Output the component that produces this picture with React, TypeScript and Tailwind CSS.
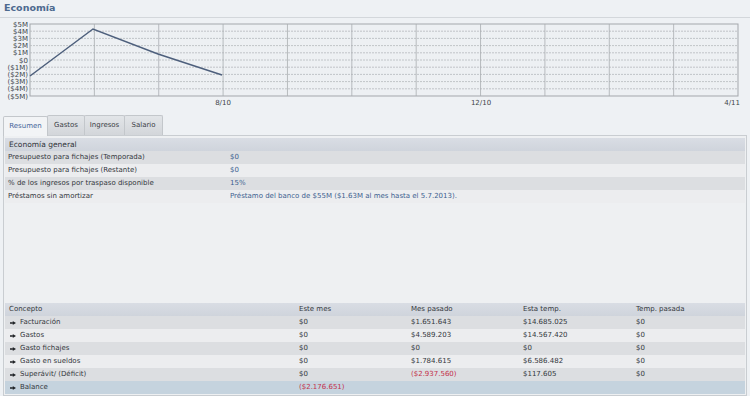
import React from "react";

const font = { fontFamily: '"DejaVu Sans", Verdana, sans-serif' };

function Chart() {
  const left = 30;
  const right = 738;
  const top = 6;
  const bottom = 78;
  const step = (bottom - top) / 10;
  const colStep = (right - left) / 11;
  const yLabels = ["$5M", "$4M", "$3M", "$2M", "$1M", "$0", "($1M)", "($2M)", "($3M)", "($4M)", "($5M)"];
  return (
    <svg width={750} height={92} className="block" style={font}>
      <rect x={left} y={top} width={right - left} height={bottom - top} fill="#edf0f3" stroke="#a3a7ab" strokeWidth={1} />
      {Array.from({ length: 9 }).map((_, i) => {
        const y = top + step * (i + 1);
        return (
          <line key={"h" + i} x1={left} x2={right} y1={y} y2={y} stroke="#b5b9bd" strokeWidth={0.8} strokeDasharray="2 1" />
        );
      })}
      {Array.from({ length: 10 }).map((_, i) => {
        const x = left + colStep * (i + 1);
        return <line key={"v" + i} x1={x} x2={x} y1={top} y2={bottom} stroke="#a9adb1" strokeWidth={0.8} />;
      })}
      {yLabels.map((l, i) => (
        <text key={l} x={28} y={top + step * i + 2.5} fontSize={7} fill="#40454b" textAnchor="end">
          {l}
        </text>
      ))}
      <polyline points="30,58 93,11 158,36 222,57" fill="none" stroke="#4d5f7c" strokeWidth={1.5} />
      <text x={223} y={87} fontSize={7} fill="#40454b" textAnchor="middle">8/10</text>
      <text x={481} y={87} fontSize={7} fill="#40454b" textAnchor="middle">12/10</text>
      <text x={740} y={87} fontSize={7} fill="#40454b" textAnchor="end">4/11</text>
    </svg>
  );
}

function Bullet() {
  return (
    <svg width={6} height={4} className="inline-block mr-[4px]" viewBox="0 0 6 4">
      <polygon points="0,1.3 3,1.3 2.6,0 6,2 2.6,4 3,2.7 0,2.7" fill="#1f2226" />
    </svg>
  );
}

const tabs = ["Resumen", "Gastos", "Ingresos", "Salario"];
const tabWidths = ["w-[45px]", "w-[38px]", "w-[41px]", "w-[39px]"];

const topRows = [
  ["Presupuesto para fichajes (Temporada)", "$0"],
  ["Presupuesto para fichajes (Restante)", "$0"],
  ["% de los ingresos por traspaso disponible", "15%"],
  ["Préstamos sin amortizar", "Préstamo del banco de $55M ($1.63M al mes hasta el 5.7.2013)."],
];

type Cell = { t: string; red?: boolean };
const bottomRows: { name: string; cells: Cell[] }[] = [
  { name: "Facturación", cells: [{ t: "$0" }, { t: "$1.651.643" }, { t: "$14.685.025" }, { t: "$0" }] },
  { name: "Gastos", cells: [{ t: "$0" }, { t: "$4.589.203" }, { t: "$14.567.420" }, { t: "$0" }] },
  { name: "Gasto fichajes", cells: [{ t: "$0" }, { t: "$0" }, { t: "$0" }, { t: "$0" }] },
  { name: "Gasto en sueldos", cells: [{ t: "$0" }, { t: "$1.784.615" }, { t: "$6.586.482" }, { t: "$0" }] },
  { name: "Superávit/ (Déficit)", cells: [{ t: "$0" }, { t: "($2.937.560)", red: true }, { t: "$117.605" }, { t: "$0" }] },
];

const grid = "grid grid-cols-[291px_111px_112px_113px_1fr]";

export default function App() {
  return (
    <div className="w-[750px] h-[396px] overflow-hidden bg-[#eef1f4] text-[#3a3f45]" style={font}>
      <div className="h-[18px] border-b border-[#d3d7db] pl-[4px] text-[9.5px] font-bold leading-[15px] text-[#4d6a8f]">
        Economía
      </div>
      <Chart />
      <div className="mt-[5px] flex pl-[3px] h-[20px] items-end">
        {tabs.map((t, i) => (
          <div
            key={t}
            className={
              "h-[20px] flex items-center justify-center text-[7px] border border-b-0 border-[#c3c7cb] rounded-t-[2px] " +
              tabWidths[i] +
              (i === 0
                ? " bg-[#f2f4f6] text-[#46669a] relative top-[1px] h-[20px]"
                : " bg-gradient-to-b from-[#e2e5e8] to-[#d3d6da] text-[#3c4147] -ml-px")
            }
          >
            {t}
          </div>
        ))}
      </div>
      <div className="mx-[3px] h-[261px] border border-[#c9cdd1] bg-[#eef0f2] px-[1px] pt-[2px] text-[7px]">
        <div className="h-[13px] flex items-center pl-[4px] bg-gradient-to-b from-[#d9dde4] to-[#cfd4dc] text-[7.5px] text-[#2f3338]">
          Economía general
        </div>
        {topRows.map((r, i) => (
          <div
            key={r[0]}
            className={"h-[13px] grid grid-cols-[221px_1fr] items-center " + (i % 2 === 0 ? "bg-[#dcdee1]" : "bg-[#ecedef]")}
          >
            <div className="pl-[3px] text-[#33373c]">{r[0]}</div>
            <div className="pl-[4px] text-[#3d5f8f]">{r[1]}</div>
          </div>
        ))}
        <div className="h-[100px]" />
        <div className={grid + " h-[13px] items-center bg-gradient-to-b from-[#d9dde4] to-[#cfd4dc] text-[#33373c]"}>
          <div className="pl-[4px]">Concepto</div>
          <div className="pl-[3px]">Este mes</div>
          <div className="pl-[4px]">Mes pasado</div>
          <div className="pl-[4px]">Esta temp.</div>
          <div className="pl-[4px]">Temp. pasada</div>
        </div>
        {bottomRows.map((r, i) => (
          <div
            key={r.name}
            className={grid + " h-[13px] items-center " + (i % 2 === 0 ? "bg-[#dcdee1]" : "bg-[#ecedef]")}
          >
            <div className="pl-[5px] flex items-center text-[#33373c]">
              <Bullet />
              {r.name}
            </div>
            {r.cells.map((c, j) => (
              <div key={j} className={(j === 0 ? "pl-[3px] " : "pl-[4px] ") + (c.red ? "text-[#c3304b]" : "text-[#33373c]")}>
                {c.t}
              </div>
            ))}
          </div>
        ))}
        <div className={grid + " h-[13px] items-center bg-[#c5d3de]"}>
          <div className="pl-[5px] flex items-center text-[#33373c]">
            <Bullet />
            Balance
          </div>
          <div className="pl-[3px] text-[#c3304b]">($2.176.651)</div>
          <div />
          <div />
          <div />
        </div>
      </div>
    </div>
  );
}
